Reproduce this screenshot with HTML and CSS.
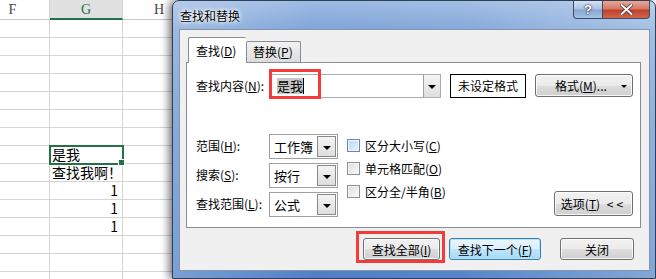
FILE: index.html
```html
<!DOCTYPE html>
<html lang="zh-CN">
<head>
    <meta charset="UTF-8">
    <meta name="viewport" content="width=device-width, initial-scale=1.0">
    <title>查找和替换</title>
    <link rel="stylesheet" href="styles.css">
</head>
<body>
    <div class="sheet">
        <div class="hd">F</div>
        <div class="hd sel">G</div>
        <div class="hd">H</div>
        <div class="hd">I</div>
        <div class="hd">J</div>
        <div class="hd">K</div>
        <div class="hd">L</div>
        <div class="hd">M</div>
        <div class="hd">N</div>

        <div class="c"></div><div class="c"></div><div class="c"></div><div class="c"></div><div class="c"></div><div class="c"></div><div class="c"></div><div class="c"></div><div class="c"></div>
        <div class="c"></div><div class="c"></div><div class="c"></div><div class="c"></div><div class="c"></div><div class="c"></div><div class="c"></div><div class="c"></div><div class="c"></div>
        <div class="c"></div><div class="c"></div><div class="c"></div><div class="c"></div><div class="c"></div><div class="c"></div><div class="c"></div><div class="c"></div><div class="c"></div>
        <div class="c"></div><div class="c"></div><div class="c"></div><div class="c"></div><div class="c"></div><div class="c"></div><div class="c"></div><div class="c"></div><div class="c"></div>
        <div class="c"></div><div class="c"></div><div class="c"></div><div class="c"></div><div class="c"></div><div class="c"></div><div class="c"></div><div class="c"></div><div class="c"></div>
        <div class="c"></div><div class="c"></div><div class="c"></div><div class="c"></div><div class="c"></div><div class="c"></div><div class="c"></div><div class="c"></div><div class="c"></div>
        <div class="c"></div><div class="c"></div><div class="c"></div><div class="c"></div><div class="c"></div><div class="c"></div><div class="c"></div><div class="c"></div><div class="c"></div>
        <div class="c"></div><div class="c active">是我</div><div class="c"></div><div class="c"></div><div class="c"></div><div class="c"></div><div class="c"></div><div class="c"></div><div class="c"></div>
        <div class="c"></div><div class="c">查找我啊！</div><div class="c"></div><div class="c"></div><div class="c"></div><div class="c"></div><div class="c"></div><div class="c"></div><div class="c"></div>
        <div class="c"></div><div class="c num">1</div><div class="c"></div><div class="c"></div><div class="c"></div><div class="c"></div><div class="c"></div><div class="c"></div><div class="c"></div>
        <div class="c"></div><div class="c num">1</div><div class="c"></div><div class="c"></div><div class="c"></div><div class="c"></div><div class="c"></div><div class="c"></div><div class="c"></div>
        <div class="c"></div><div class="c num">1</div><div class="c"></div><div class="c"></div><div class="c"></div><div class="c"></div><div class="c"></div><div class="c"></div><div class="c"></div>
        <div class="c"></div><div class="c"></div><div class="c"></div><div class="c"></div><div class="c"></div><div class="c"></div><div class="c"></div><div class="c"></div><div class="c"></div>
        <div class="c"></div><div class="c"></div><div class="c"></div><div class="c"></div><div class="c"></div><div class="c"></div><div class="c"></div><div class="c"></div><div class="c"></div>
        <div class="c"></div><div class="c"></div><div class="c"></div><div class="c"></div><div class="c"></div><div class="c"></div><div class="c"></div><div class="c"></div><div class="c"></div>
    </div>

    <div class="window">
        <div class="titlebar">
            <span class="title">查找和替换</span>
            <span class="cap help">?</span>
            <span class="cap close">
                <svg width="13" height="11" viewBox="0 0 13 11"><path d="M1.5 1 L11.5 10 M11.5 1 L1.5 10" stroke="#3a2b2b" stroke-width="3.4" stroke-linecap="round"/><path d="M1.5 1 L11.5 10 M11.5 1 L1.5 10" stroke="#fff" stroke-width="2" stroke-linecap="round"/></svg>
            </span>
        </div>

        <div class="client">
            <div class="tabs">
                <div class="tab on">查找(<u>D</u>)</div>
                <div class="tab">替换(<u>P</u>)</div>
            </div>

            <div class="panel">
                <div class="find-row">
                    <span class="lbl">查找内容(<u>N</u>):</span>
                    <div class="combo mark">
                        <span class="typed">是我</span><span class="caret"></span>
                        <span class="arrow"></span>
                    </div>
                    <div class="fmt-preview">未设定格式</div>
                    <button class="btn fmt">格式(<u>M</u>)... <span class="tri"></span></button>
                </div>

                <div class="lower">
                    <div class="fields">
                        <span class="lbl">范围(<u>H</u>):</span>
                        <div class="select">工作簿<span class="arrow"></span></div>
                        <span class="lbl">搜索(<u>S</u>):</span>
                        <div class="select">按行<span class="arrow"></span></div>
                        <span class="lbl">查找范围(<u>L</u>):</span>
                        <div class="select">公式<span class="arrow"></span></div>
                    </div>

                    <div class="checks">
                        <label class="chk"><span class="box hot"></span>区分大小写(<u>C</u>)</label>
                        <label class="chk"><span class="box"></span>单元格匹配(<u>O</u>)</label>
                        <label class="chk"><span class="box"></span>区分全/半角(<u>B</u>)</label>
                    </div>

                    <button class="btn options">选项(<u>T</u>) <span class="lt">&lt;&lt;</span></button>
                </div>
            </div>

            <div class="actions">
                <button class="btn find-all mark">查找全部(<u>I</u>)</button>
                <button class="btn find-next">查找下一个(<u>F</u>)</button>
                <button class="btn close-btn">关闭</button>
            </div>
        </div>
    </div>
</body>
</html>
```

FILE: styles.css
```css
body {
    margin: 0;
    width: 656px;
    height: 279px;
    overflow: hidden;
    position: relative;
    background: #fff;
    font-family: "Noto Sans CJK SC", "Liberation Sans", sans-serif;
}

/* spreadsheet behind the dialog */
.sheet {
    display: grid;
    grid-template-columns: 74px repeat(8, 73px);
    grid-template-rows: 20px;
    grid-auto-rows: 18px;
    margin-left: -24px;
}
.hd {
    box-sizing: border-box;
    border-right: 1px solid #d4d4d4;
    border-bottom: 1px solid #c6c6c6;
    text-align: center;
    font-family: "Liberation Serif", serif;
    font-size: 14px;
    line-height: 20px;
    color: #444;
}
.hd.sel {
    background: #e1e1e1;
    color: #217346;
    border-bottom: 2px solid #217346;
}
.c {
    box-sizing: border-box;
    border-right: 1px solid #d4d4d4;
    border-bottom: 1px solid #d4d4d4;
    font-size: 14px;
    line-height: 17px;
    padding-left: 2px;
    white-space: nowrap;
    color: #000;
    position: relative;
}
.c.num {
    text-align: right;
    padding-right: 4px;
}
.c.active {
    outline: 2px solid #217346;
    outline-offset: -1px;
    z-index: 1;
}
.c.active::after {
    content: "";
    position: absolute;
    right: -3px;
    bottom: -3px;
    width: 5px;
    height: 5px;
    background: #217346;
    border: 1px solid #fff;
}

/* dialog window */
.window {
    position: absolute;
    left: 172px;
    top: 0;
    width: 484px;
    height: 279px;
    box-sizing: border-box;
    border: 1px solid #2e3f58;
    border-radius: 7px 7px 0 0;
    padding: 0 5px 7px 6px;
    display: flex;
    flex-direction: column;
    background:
        linear-gradient(90deg, rgba(255,255,255,0.25) 0%, rgba(255,255,255,0) 30%, rgba(255,255,255,0.05) 60%, rgba(255,255,255,0.3) 100%),
        linear-gradient(180deg, #9dbbe3 0%, #7aa1d6 12%, #5f8fcf 45%, #4d80c6 100%);
    box-shadow: -3px 0 8px rgba(0,0,0,0.55);
}
.titlebar {
    height: 28px;
    display: flex;
    align-items: flex-start;
}
.title {
    padding: 6px 0 0 1px;
    font-size: 12px;
    line-height: 17px;
    color: #000;
    text-shadow: 0 0 6px #fff, 0 0 4px #fff, 0 0 2px #fff;
    margin-right: auto;
}
.cap {
    height: 17px;
    display: flex;
    align-items: center;
    justify-content: center;
    border: 1px solid #3b4c66;
    border-top: none;
}
.help {
    width: 28px;
    border-radius: 0 0 0 4px;
    background: linear-gradient(180deg, #d5e2f2 0%, #aac2e2 48%, #86a6d2 52%, #a8c2e4 100%);
    color: #fff;
    font: bold 13px "Liberation Sans", sans-serif;
    text-shadow: 0 0 2px #223, 0 0 1px #223;
}
.close {
    width: 46px;
    margin-right: 0;
    border-left: none;
    border-radius: 0 0 4px 0;
    background: linear-gradient(180deg, #e8a898 0%, #d47a66 45%, #c0402c 55%, #d0664d 100%);
}

.client {
    flex: 1;
    box-sizing: border-box;
    border: 1px solid #8595ad;
    background: #f0f0f0;
    padding: 7px 8px 0 6px;
    font-size: 12px;
    color: #000;
}
u {
    text-decoration: underline;
    text-underline-offset: 1px;
}

.tabs {
    display: flex;
    align-items: flex-end;
    height: 25px;
    padding-left: 2px;
}
.tab {
    box-sizing: border-box;
    height: 21px;
    padding: 0 6px;
    line-height: 20px;
    white-space: nowrap;
    border: 1px solid #898c95;
    border-bottom: none;
    background: linear-gradient(180deg, #f2f2f2, #dcdcdc);
    border-radius: 2px 2px 0 0;
}
.tab.on {
    height: 26px;
    width: 58px;
    padding: 0 7px;
    margin-bottom: -1px;
    background: #fff;
    border-right: none;
    line-height: 25px;
    position: relative;
    z-index: 1;
}
.tab + .tab {
    width: 55px;
}

.panel {
    box-sizing: border-box;
    height: 166px;
    border: 1px solid #898c95;
    background: #fff;
    padding: 11px 7px 0 9px;
}
.find-row {
    display: flex;
    align-items: flex-start;
    height: 24px;
}
.lbl {
    line-height: 24px;
    white-space: nowrap;
}
.find-row .lbl {
    width: 75px;
}
.combo {
    box-sizing: border-box;
    width: 170px;
    height: 24px;
    border: 1px solid #abadb3;
    background: #fff;
    display: flex;
    align-items: center;
    padding-left: 5px;
    position: relative;
}
.typed {
    background: #c8c8c8;
    line-height: 16px;
    font-size: 13px;
}
.caret {
    width: 1px;
    height: 16px;
    background: #000;
}
.arrow {
    position: absolute;
    right: 0;
    top: 0;
    bottom: 0;
    width: 16px;
    border-left: 1px solid #a0a0a0;
    background: linear-gradient(180deg, #f4f4f4, #dedede);
}
.arrow::after,
.tri::after {
    content: "";
    position: absolute;
    left: 50%;
    top: 50%;
    margin: -1px 0 0 -4px;
    border-left: 4px solid transparent;
    border-right: 4px solid transparent;
    border-top: 4px solid #000;
}
.mark::before {
    content: "";
    position: absolute;
    left: -3px;
    top: -6px;
    width: 52px;
    height: 30px;
    box-sizing: border-box;
    border: 3px solid #f53a3a;
}
.fmt-preview {
    box-sizing: border-box;
    width: 76px;
    height: 24px;
    margin-left: 9px;
    border: 1px solid #000;
    background: #fff;
    text-align: center;
    line-height: 22px;
}

.btn {
    box-sizing: border-box;
    font-family: inherit;
    font-size: 12px;
    color: #000;
    border: 1px solid #707070;
    border-radius: 3px;
    background: linear-gradient(180deg, #f2f2f2 0%, #ebebeb 50%, #dddddd 51%, #cfcfcf 100%);
    box-shadow: inset 0 0 0 1px rgba(255,255,255,0.8);
    padding: 0;
    position: relative;
}
.fmt {
    width: 98px;
    height: 23px;
    margin-left: 9px;
    text-align: left;
    padding-left: 19px;
}
.tri {
    position: absolute;
    right: 3px;
    top: 0;
    bottom: 0;
    width: 10px;
}
.tri::after {
    border-width: 3px;
    margin: -1px 0 0 -3px;
}

.lower {
    display: flex;
    margin-top: 36px;
}
.fields {
    display: grid;
    grid-template-columns: 73px 69px;
    grid-auto-rows: 25px;
    row-gap: 4px;
}
.select {
    box-sizing: border-box;
    border: 1px solid #a0a0a0;
    background: #fff;
    line-height: 23px;
    padding-left: 4px;
    font-size: 13px;
    position: relative;
}
.select .arrow {
    width: 17px;
    border: 1px solid #8a8a8a;
    margin: 1px;
}
.checks {
    margin-left: 9px;
    padding-top: 3px;
    display: flex;
    flex-direction: column;
    gap: 6px;
}
.chk {
    display: flex;
    align-items: center;
    height: 17px;
    white-space: nowrap;
}
.box {
    box-sizing: border-box;
    width: 13px;
    height: 13px;
    margin-right: 5px;
    border: 1px solid #8e8f8f;
    background: linear-gradient(135deg, #dcdcdc, #fbfbfb);
    box-shadow: inset 0 0 0 1px #f4f4f4;
}
.box.hot {
    border-color: #5d8bc0;
    background: linear-gradient(135deg, #b9d7f2, #eaf4fc);
}
.options {
    width: 79px;
    height: 25px;
    margin-left: auto;
    margin-top: 57px;
}
.lt {
    letter-spacing: 3px;
    margin-left: 4px;
}

.actions {
    display: flex;
    justify-content: flex-end;
    margin-top: 10px;
    padding-right: 7px;
}
.actions .btn {
    height: 22px;
}
.find-all {
    width: 77px;
}
.find-all::before {
    left: -8px;
    top: -8px;
    width: 89px;
    height: 32px;
}
.find-next {
    width: 92px;
    margin-left: 9px;
    border-color: #3c7fb1;
    box-shadow: inset 0 0 0 1px #b6e0f9;
    background: linear-gradient(180deg, #eaf6fd 0%, #d9f0fc 50%, #bee6fd 51%, #a7d9f5 100%);
}
.close-btn {
    width: 74px;
    margin-left: 19px;
}
```
